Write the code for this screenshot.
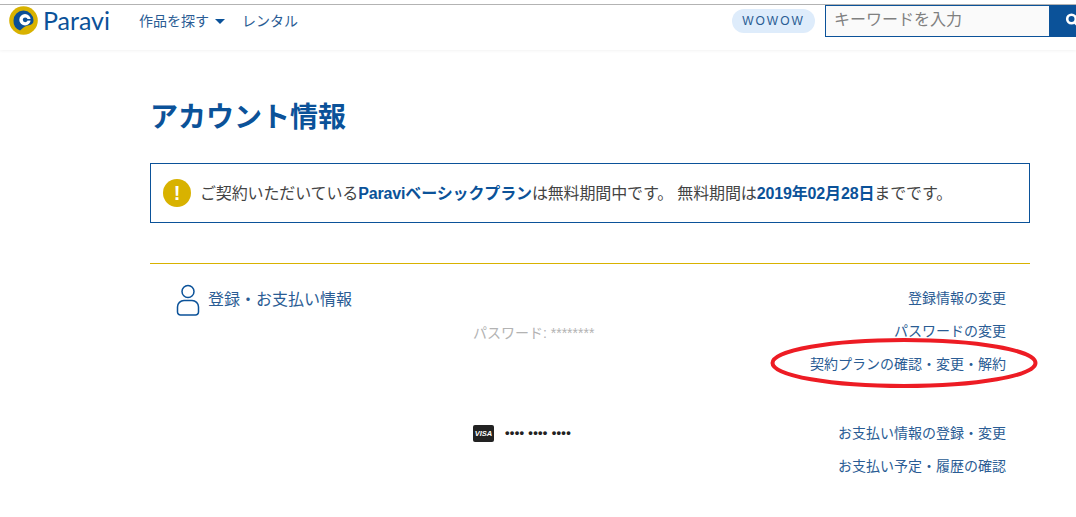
<div class="page">
  <header class="header">
    <div class="brand">
      <svg class="logo" width="29" height="29" viewBox="0 0 29 29" aria-hidden="true">
        <circle cx="14.500" cy="14.500" r="14.300" fill="#d8b200" />
        <path d="M14.500 4.500a10 10 0 0 1 10 10c0 3-1.800 4.300-4.500 4.800c-2 .4-3.800 1-5.500 2.200l-3.500 3a10.200 10.200 0 0 1-6.500-10a10 10 0 0 1 10-10z" fill="#0b4f97" />
        <circle cx="16" cy="13.800" r="5.700" fill="#fff" />
        <circle cx="16.200" cy="13.800" r="2.400" fill="#0b4f97" />
        <rect x="17" y="13" width="5.500" height="1.600" fill="#0b4f97" />
      </svg>
      <span class="wordmark">Paravi</span>
    </div>
    <nav class="nav">
      <span class="nav-item">作品を探す<i class="caret"></i></span>
      <span class="nav-item">レンタル</span>
    </nav>
    <div class="tools">
      <span class="pill">WOWOW</span>
      <div class="search">
        <span class="field">キーワードを入力</span>
        <span class="go">
          <svg width="18" height="18" viewBox="0 0 18 18" aria-hidden="true">
            <circle cx="6.500" cy="7" r="4.300" fill="none" stroke="#fff" stroke-width="2.600" />
            <path d="M10 10.500l5 5" stroke="#fff" stroke-width="3" />
          </svg>
        </span>
      </div>
    </div>
  </header>

  <main class="main">
    <h1 class="title">アカウント情報</h1>

    <div class="notice">
      <span class="mark">!</span>
      <p>ご契約いただいている<b>Paraviベーシックプラン</b>は無料期間中です。 無料期間は<b>2019年02月28日</b>までです。</p>
    </div>

    <section class="account">
      <div class="heading">
        <svg width="24" height="32" viewBox="0 0 24 32" aria-hidden="true">
          <circle cx="12" cy="7.500" r="6" fill="none" stroke="#0b5299" stroke-width="1.500" />
          <path d="M8 16.500h8a6.500 6.500 0 0 1 6.500 6.500v5a3 3 0 0 1-3 3h-15a3 3 0 0 1-3-3v-5a6.500 6.500 0 0 1 6.500-6.500z" fill="none" stroke="#0b5299" stroke-width="1.500" />
        </svg>
        <span>登録・お支払い情報</span>
      </div>

      <div class="group first">
        <div class="value pw">パスワード: ********</div>
        <div class="links">
          <a href="#a">登録情報の変更</a>
          <a href="#b">パスワードの変更</a>
          <a href="#c">契約プランの確認・変更・解約</a>
        </div>
      </div>

      <div class="group second">
        <div class="value card"><span class="visa">VISA</span><span class="dots">•••• •••• ••••</span></div>
        <div class="links">
          <a href="#d">お支払い情報の登録・変更</a>
          <a href="#e">お支払い予定・履歴の確認</a>
        </div>
      </div>
    </section>
  </main>

  <svg class="ellipse" width="272" height="54" viewBox="0 0 272 54" aria-hidden="true">
    <ellipse cx="135" cy="27" rx="131.500" ry="23" fill="none" stroke="#ed1c24" stroke-width="4" />
  </svg>
</div>

<style>
  :global(body) {
    margin: 0;
    background: #fff;
  }

  .page {
    position: relative;
    width: 1076px;
    height: 517px;
    overflow: hidden;
    font-family: "Liberation Sans", "Noto Sans CJK JP", sans-serif;
    color: #0b5299;
  }

  .header {
    box-sizing: border-box;
    height: 50px;
    padding: 5px 0 0 9px;
    display: flex;
    align-items: flex-start;
    background: linear-gradient(#fff 4px, #b3b3b3 4px, #b3b3b3 5px, #fff 5px);
    box-shadow: 0 1px 3px rgba(0, 0, 0, 0.05);
  }

  .brand {
    display: flex;
    align-items: center;
    gap: 5px;
    height: 29px;
    margin-top: 1px;
  }

  .wordmark {
    font-family: "Lato", sans-serif;
    font-size: 25px;
    color: #0b5299;
    line-height: 29px;
  }

  .nav {
    display: flex;
    gap: 17px;
    margin-left: 29px;
    font-size: 14px;
    line-height: 32px;
    color: #2a5c94;
  }

  .caret {
    display: inline-block;
    margin-left: 6px;
    vertical-align: 2px;
    border-left: 5px solid transparent;
    border-right: 5px solid transparent;
    border-top: 5px solid #0b5299;
  }

  .tools {
    display: flex;
    align-items: flex-start;
    gap: 10px;
    margin-left: auto;
  }

  .pill {
    width: 83px;
    height: 24px;
    margin-top: 4px;
    border-radius: 12px;
    background: #deecfb;
    font-family: "Liberation Sans", sans-serif;
    font-size: 12px;
    letter-spacing: 2px;
    line-height: 25px;
    text-align: center;
    color: #2a5c94;
  }

  .search {
    display: flex;
    width: 251px;
    height: 32px;
  }

  .field {
    box-sizing: border-box;
    width: 224px;
    height: 32px;
    padding-left: 8px;
    border: 1px solid #0b5299;
    border-right: 0;
    background: #fafafa;
    font-size: 16px;
    line-height: 28px;
    color: #808080;
  }

  .go {
    flex: 1;
    overflow: hidden;
    display: flex;
    align-items: center;
    padding-left: 16px;
    background: #0b5299;
  }

  .go svg {
    flex-shrink: 0;
  }

  .main {
    box-sizing: border-box;
    width: 880px;
    margin-left: 150px;
  }

  .title {
    margin: 50px 0 0;
    font-size: 28px;
    line-height: 36px;
    font-weight: 700;
    color: #0b5299;
  }

  .notice {
    box-sizing: border-box;
    height: 60px;
    margin-top: 27px;
    padding-left: 12px;
    display: flex;
    align-items: center;
    gap: 9px;
    border: 1px solid #0b5299;
  }

  .mark {
    width: 28px;
    height: 28px;
    border-radius: 50%;
    background: #d8b200;
    color: #fff;
    font-size: 20px;
    font-weight: 700;
    line-height: 28px;
    text-align: center;
  }

  .notice p {
    margin: 2px 0 0;
    font-size: 16px;
    line-height: 24px;
    letter-spacing: -0.140px;
    color: #444;
  }

  .notice b {
    color: #0b5299;
  }

  .account {
    position: relative;
    margin-top: 40px;
    border-top: 1px solid #d8b200;
    height: 220px;
  }

  .heading {
    position: absolute;
    left: 26px;
    top: 20px;
    display: flex;
    align-items: center;
    gap: 8px;
    font-size: 16px;
    line-height: 30px;
    color: #2a5c94;
  }

  .group {
    display: flex;
    justify-content: space-between;
    padding: 0 24px 0 323px;
  }

  .first {
    padding-top: 23px;
  }

  .second {
    padding-top: 47px;
  }

  .links {
    display: flex;
    flex-direction: column;
    align-items: flex-end;
    gap: 11px;
    font-size: 14px;
    line-height: 22px;
  }

  .links a {
    color: #2a5c94;
    text-decoration: none;
  }

  .value {
    font-size: 14px;
    line-height: 22px;
    color: #b3b3b3;
  }

  .pw {
    padding-top: 35px;
  }

  .card {
    display: flex;
    align-items: center;
    gap: 11px;
    height: 22px;
    color: #222;
  }

  .visa {
    width: 21px;
    height: 17px;
    border-radius: 2px;
    background: #222;
    color: #fff;
    font-size: 7.500px;
    font-weight: 700;
    font-style: italic;
    line-height: 17px;
    text-align: center;
  }

  .dots {
    font-size: 13px;
    font-weight: 700;
    letter-spacing: 0.300px;
  }

  .ellipse {
    position: absolute;
    left: 769px;
    top: 336px;
  }
</style>
